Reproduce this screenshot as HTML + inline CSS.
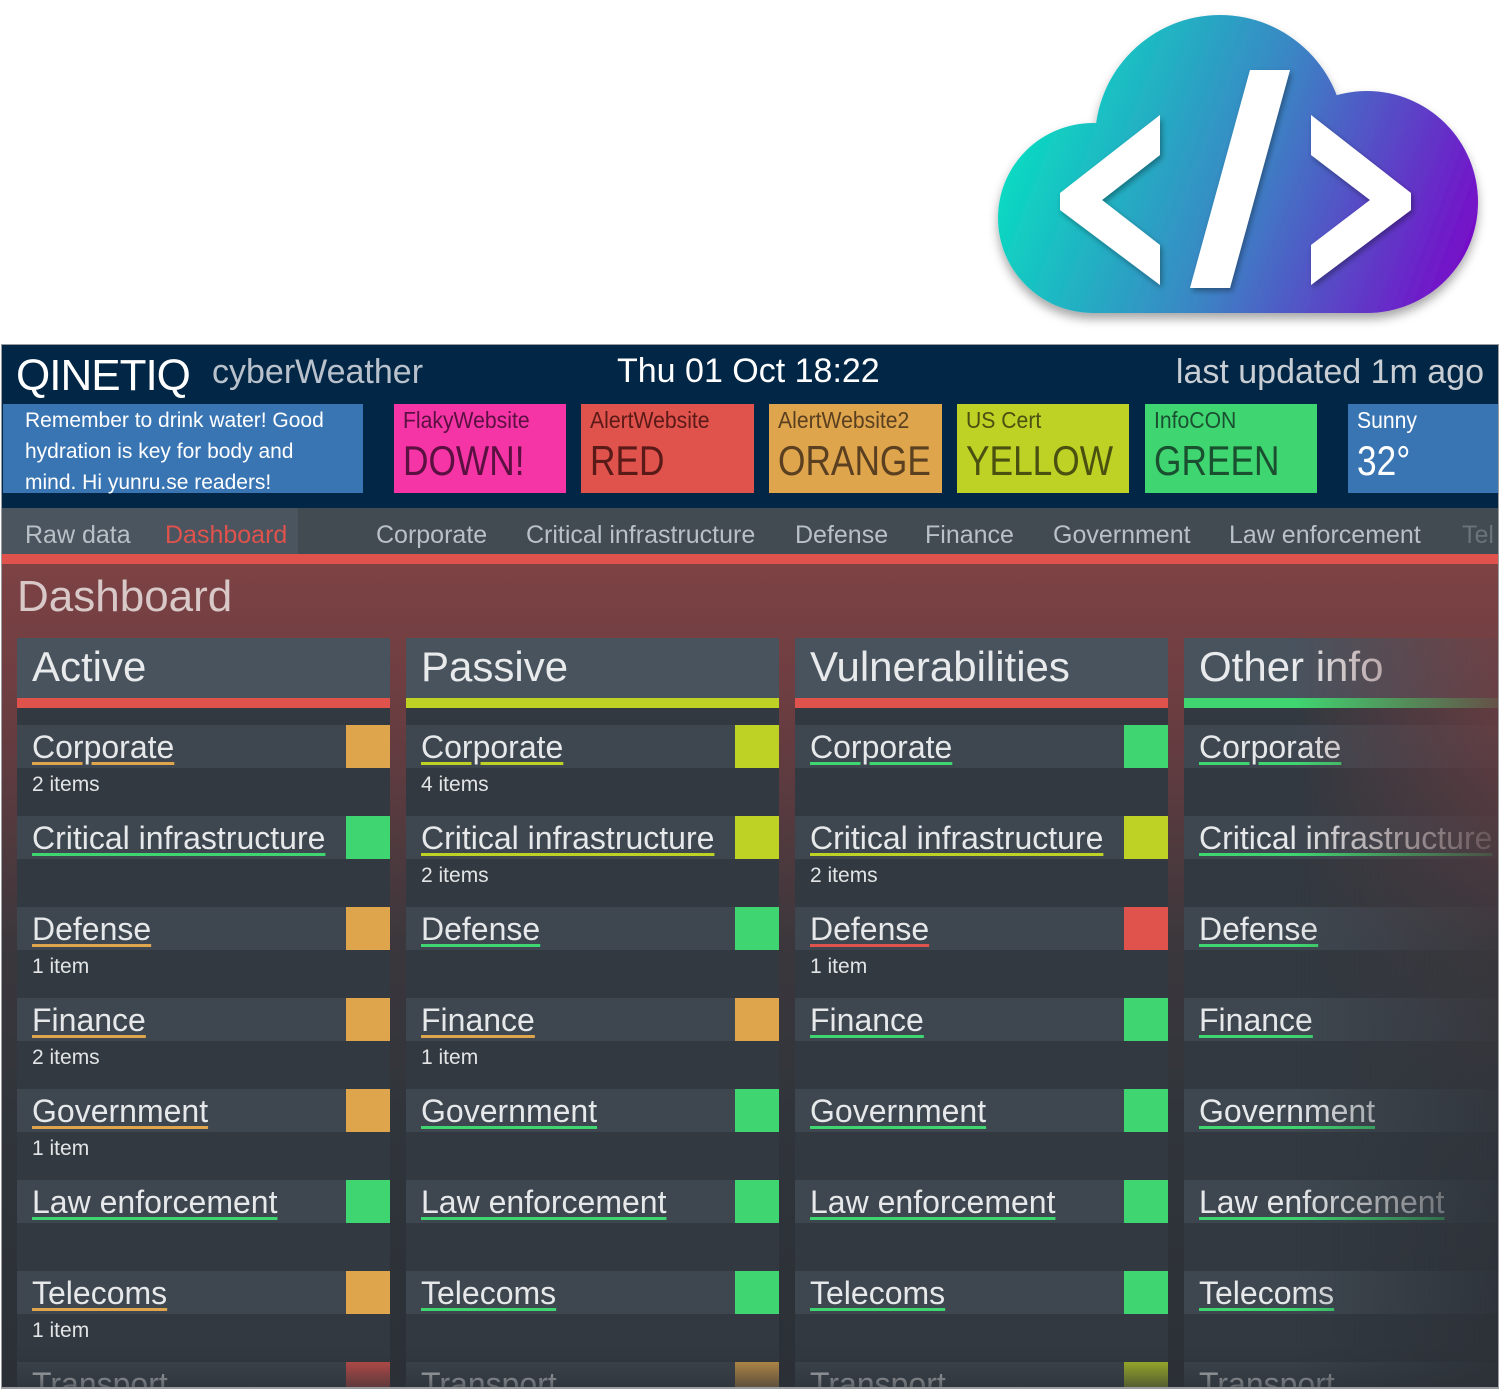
<!DOCTYPE html>
<html><head><meta charset="utf-8"><style>
*{margin:0;padding:0;box-sizing:border-box}
body{width:1500px;height:1390px;background:#fff;position:relative;overflow:hidden;font-family:"Liberation Sans",sans-serif}
.abs{position:absolute}
#frame{left:1px;top:344px;width:1498px;height:1045px;border:1px solid #9a9ca0;border-bottom:2px solid #9a9ca0;overflow:hidden;background:#022645}
.tile{position:absolute;top:59px;height:89px;padding-left:9px;overflow:hidden}
.tile .l{font-size:23px;margin-top:3px;white-space:nowrap;transform:scaleX(.92);transform-origin:left}
.tile .b{font-size:42px;margin-top:3px;white-space:nowrap;transform:scaleX(.84);transform-origin:left}
#tabs{position:absolute;left:0;top:163px;width:100%;height:46px;background:#424a52}
#tabs span{position:absolute;top:13px;font-size:25px;color:#b9c0c6;white-space:nowrap}
#content{position:absolute;left:0;top:219px;width:100%;height:830px;background:linear-gradient(#7d4244 0,#6a3d41 150px,#3b373c 380px,#30353b 560px,#2b3036 830px)}
.col{position:absolute;top:74px;width:373px;height:760px;background:#323940}
.hd{height:60px;background:#48535e;color:#e8eaec;font-size:42px;padding:5px 0 0 15px;white-space:nowrap}
.bar{height:10px}
.row{position:absolute;left:0;width:373px;height:91px}
.row .t{height:43px;background:#3e4750;position:relative}
.row a{position:absolute;left:15px;top:4px;font-size:32px;color:#e6e8ea;text-decoration:underline;text-decoration-thickness:3px;text-underline-offset:4px;white-space:nowrap}
.row .sq{position:absolute;right:0;top:0;width:44px;height:43px}
.row .s{font-size:21px;color:#e2e4e6;padding:5px 0 0 15px}
.O{background:#dfa54d}.G{background:#3fd671}.Y{background:#bdd225}.R{background:#e0524c}
a.uO{text-decoration-color:#dfa54d!important}a.uG{text-decoration-color:#3fd671!important}a.uY{text-decoration-color:#bdd225!important}a.uR{text-decoration-color:#e0524c!important}
#fade{position:absolute;left:0;top:1000px;width:100%;height:50px;background:linear-gradient(rgba(43,48,54,0),rgba(43,48,54,.85))}
.other{-webkit-mask-image:linear-gradient(to right,#000 0,#000 110px,rgba(0,0,0,.15) 310px,rgba(0,0,0,0) 330px);mask-image:linear-gradient(to right,#000 0,#000 110px,rgba(0,0,0,.15) 310px,rgba(0,0,0,0) 330px)}
</style></head><body>
<svg class="abs" style="left:980px;top:0" width="520" height="340" viewBox="980 0 520 340">
<defs><linearGradient id="g" gradientUnits="userSpaceOnUse" x1="1000" y1="120" x2="1470" y2="300"><stop offset="0" stop-color="#06e3c2"/><stop offset=".5" stop-color="#3b84c4"/><stop offset="1" stop-color="#7a05c9"/></linearGradient>
<filter id="sh" x="-10%" y="-10%" width="120%" height="130%"><feDropShadow dx="0" dy="6" stdDeviation="5" flood-color="#000" flood-opacity=".35"/></filter>
<filter id="sh2"><feDropShadow dx="2" dy="3" stdDeviation="3" flood-color="#000" flood-opacity=".35"/></filter></defs>
<g fill="url(#g)" filter="url(#sh)"><circle cx="1093" cy="218" r="95"/><circle cx="1220" cy="140" r="125"/><circle cx="1367" cy="202" r="111"/><rect x="1093" y="180" width="274" height="133"/></g>
<g fill="#fff" filter="url(#sh2)"><polygon points="1160,115 1060,193 1060,210 1160,285 1160,245 1102,200 1160,155"/><polygon points="1311,115 1411,193 1411,210 1311,285 1311,245 1370,200 1311,155"/><polygon points="1250,70 1290,70 1230,288 1190,288"/></g>
</svg>
<div id="frame" class="abs">
 <div class="abs" style="left:14px;top:6px;font-size:44px;color:#fff;letter-spacing:-1px">QINETIQ</div>
 <div class="abs" style="left:210px;top:8px;font-size:34px;color:#b9c2cc">cyberWeather</div>
 <div class="abs" style="left:615px;top:7px;font-size:34px;color:#fff">Thu 01 Oct 18:22</div>
 <div class="abs" style="right:14px;top:8px;font-size:34px;color:#c8ced4">last updated 1m ago</div>
 <div class="abs" style="left:1px;top:59px;width:360px;height:89px;background:#3a75b3;color:#fff;font-size:21px;line-height:31px;padding:1px 0 0 22px;white-space:nowrap">Remember to drink water! Good<br>hydration is key for body and<br>mind. Hi yunru.se readers!</div>
 <div class="tile" style="left:392px;width:172px;background:#f535a6;color:#5a1040"><div class="l">FlakyWebsite</div><div class="b">DOWN!</div></div>
 <div class="tile" style="left:579px;width:173px;background:#e0524c;color:#5a1a18"><div class="l">AlertWebsite</div><div class="b">RED</div></div>
 <div class="tile" style="left:767px;width:173px;background:#dfa54d;color:#5a4020"><div class="l">AlertWebsite2</div><div class="b">ORANGE</div></div>
 <div class="tile" style="left:955px;width:172px;background:#bdd225;color:#4a5010"><div class="l">US Cert</div><div class="b">YELLOW</div></div>
 <div class="tile" style="left:1143px;width:172px;background:#3fd671;color:#1a5030"><div class="l">InfoCON</div><div class="b">GREEN</div></div>
 <div class="tile" style="left:1346px;width:160px;background:#3a75b3;color:#fff"><div class="l">Sunny</div><div class="b">32°</div></div>
 <div id="tabs"><div class="abs" style="left:0;top:0;width:296px;height:46px;background:#4a5560"></div>
  <span style="left:23px">Raw data</span><span style="left:163px;color:#e0524c">Dashboard</span>
  <span style="left:374px">Corporate</span><span style="left:524px">Critical infrastructure</span><span style="left:793px">Defense</span><span style="left:923px">Finance</span><span style="left:1051px">Government</span><span style="left:1227px">Law enforcement</span><span style="left:1460px;opacity:.35">Tel</span></div>
 <div class="abs" style="left:0;top:209px;width:100%;height:10px;background:#e0524c"></div>
 <div id="content">
  <div class="abs" style="left:15px;top:8px;font-size:44px;color:#d8c8c8">Dashboard</div>

  <div class="col" style="left:15px"><div class="hd">Active</div><div class="bar R"></div>
   <div class="row" style="top:87px"><div class="t"><a class="uO">Corporate</a><div class="sq O"></div></div><div class="s">2 items</div></div>
   <div class="row" style="top:178px"><div class="t"><a class="uG">Critical infrastructure</a><div class="sq G"></div></div></div>
   <div class="row" style="top:269px"><div class="t"><a class="uO">Defense</a><div class="sq O"></div></div><div class="s">1 item</div></div>
   <div class="row" style="top:360px"><div class="t"><a class="uO">Finance</a><div class="sq O"></div></div><div class="s">2 items</div></div>
   <div class="row" style="top:451px"><div class="t"><a class="uO">Government</a><div class="sq O"></div></div><div class="s">1 item</div></div>
   <div class="row" style="top:542px"><div class="t"><a class="uG">Law enforcement</a><div class="sq G"></div></div></div>
   <div class="row" style="top:633px"><div class="t"><a class="uO">Telecoms</a><div class="sq O"></div></div><div class="s">1 item</div></div>
   <div class="row" style="top:724px"><div class="t"><a class="uR">Transport</a><div class="sq R"></div></div></div>
  </div>

  <div class="col" style="left:404px"><div class="hd">Passive</div><div class="bar Y"></div>
   <div class="row" style="top:87px"><div class="t"><a class="uY">Corporate</a><div class="sq Y"></div></div><div class="s">4 items</div></div>
   <div class="row" style="top:178px"><div class="t"><a class="uY">Critical infrastructure</a><div class="sq Y"></div></div><div class="s">2 items</div></div>
   <div class="row" style="top:269px"><div class="t"><a class="uG">Defense</a><div class="sq G"></div></div></div>
   <div class="row" style="top:360px"><div class="t"><a class="uO">Finance</a><div class="sq O"></div></div><div class="s">1 item</div></div>
   <div class="row" style="top:451px"><div class="t"><a class="uG">Government</a><div class="sq G"></div></div></div>
   <div class="row" style="top:542px"><div class="t"><a class="uG">Law enforcement</a><div class="sq G"></div></div></div>
   <div class="row" style="top:633px"><div class="t"><a class="uG">Telecoms</a><div class="sq G"></div></div></div>
   <div class="row" style="top:724px"><div class="t"><a class="uO">Transport</a><div class="sq O"></div></div></div>
  </div>

  <div class="col" style="left:793px"><div class="hd">Vulnerabilities</div><div class="bar R"></div>
   <div class="row" style="top:87px"><div class="t"><a class="uG">Corporate</a><div class="sq G"></div></div></div>
   <div class="row" style="top:178px"><div class="t"><a class="uY">Critical infrastructure</a><div class="sq Y"></div></div><div class="s">2 items</div></div>
   <div class="row" style="top:269px"><div class="t"><a class="uR">Defense</a><div class="sq R"></div></div><div class="s">1 item</div></div>
   <div class="row" style="top:360px"><div class="t"><a class="uG">Finance</a><div class="sq G"></div></div></div>
   <div class="row" style="top:451px"><div class="t"><a class="uG">Government</a><div class="sq G"></div></div></div>
   <div class="row" style="top:542px"><div class="t"><a class="uG">Law enforcement</a><div class="sq G"></div></div></div>
   <div class="row" style="top:633px"><div class="t"><a class="uG">Telecoms</a><div class="sq G"></div></div></div>
   <div class="row" style="top:724px"><div class="t"><a class="uY">Transport</a><div class="sq Y"></div></div></div>
  </div>

  <div class="col other" style="left:1182px"><div class="hd">Other info</div><div class="bar G"></div>
   <div class="row" style="top:87px"><div class="t"><a class="uG">Corporate</a></div></div>
   <div class="row" style="top:178px"><div class="t"><a class="uG">Critical infrastructure</a></div></div>
   <div class="row" style="top:269px"><div class="t"><a class="uG">Defense</a></div></div>
   <div class="row" style="top:360px"><div class="t"><a class="uG">Finance</a></div></div>
   <div class="row" style="top:451px"><div class="t"><a class="uG">Government</a></div></div>
   <div class="row" style="top:542px"><div class="t"><a class="uG">Law enforcement</a></div></div>
   <div class="row" style="top:633px"><div class="t"><a class="uG">Telecoms</a></div></div>
   <div class="row" style="top:724px"><div class="t"><a class="uG">Transport</a></div></div>
  </div>
 </div>
 <div id="fade"></div>
</div>
</body></html>
